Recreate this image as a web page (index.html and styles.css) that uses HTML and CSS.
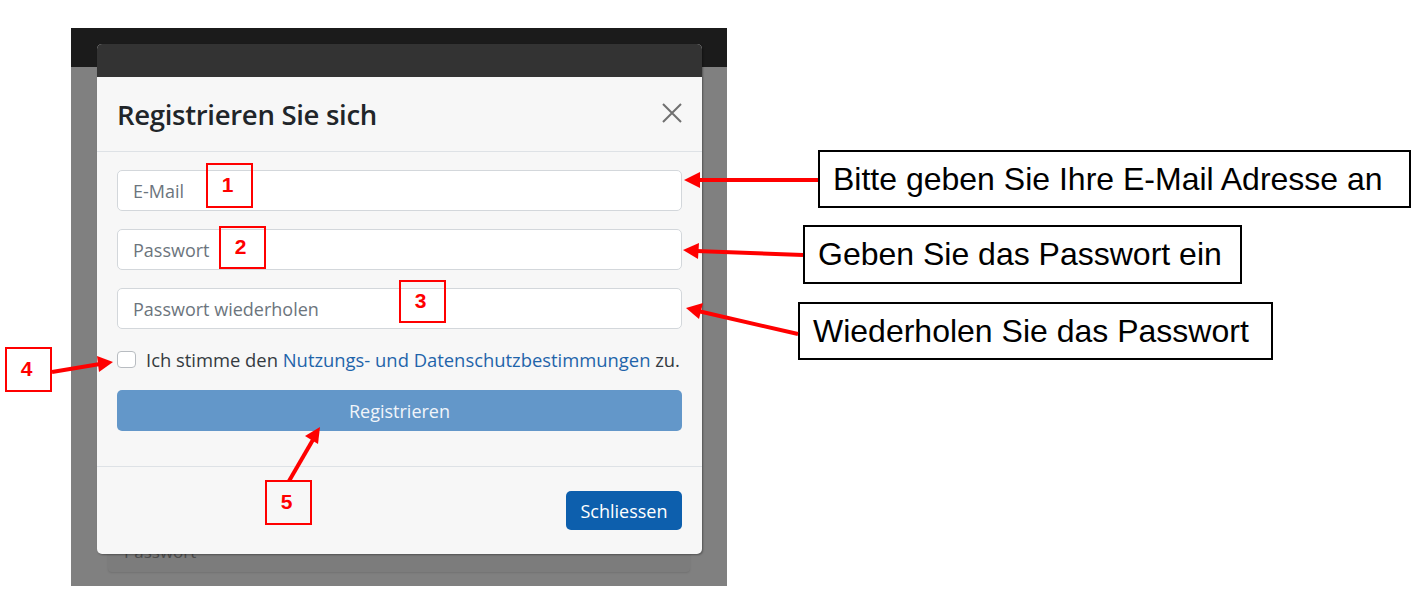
FILE: index.html
```html
<!DOCTYPE html>
<html lang="de">
<head>
<meta charset="utf-8">
<title>Registrieren</title>
<link rel="stylesheet" href="styles.css">
</head>
<body>
<div class="canvas">
  <div class="shot">
    <div class="nav"></div>
    <div class="page">
      <div class="bg-card"><span class="bg-label">Passwort</span></div>
    </div>
    <div class="modal">
      <div class="modal-topband"></div>
      <div class="modal-header">
        <h5 class="modal-title">Registrieren Sie sich</h5>
        <button class="btn-close" aria-label="Schliessen">
          <svg width="22" height="20" viewBox="0 0 22 20"><path d="M2 1 L20 19 M20 1 L2 19" stroke="#707070" stroke-width="2" fill="none"/></svg>
        </button>
      </div>
      <div class="modal-body">
        <input class="form-control" type="email" placeholder="E-Mail">
        <input class="form-control" type="password" placeholder="Passwort">
        <input class="form-control" type="password" placeholder="Passwort wiederholen">
        <label class="check-row">
          <span class="check-box"></span>
          <span>Ich stimme den <a class="link" href="#">Nutzungs- und Datenschutzbestimmungen</a> zu.</span>
        </label>
        <button class="btn-register">Registrieren</button>
      </div>
      <div class="modal-footer">
        <button class="btn-primary">Schliessen</button>
      </div>
    </div>
  </div>

  <div class="callout callout-1">Bitte geben Sie Ihre E-Mail Adresse an</div>
  <div class="callout callout-2">Geben Sie das Passwort ein</div>
  <div class="callout callout-3">Wiederholen Sie das Passwort</div>

  <div class="num num-1">1</div>
  <div class="num num-2">2</div>
  <div class="num num-3">3</div>
  <div class="num num-4">4</div>
  <div class="num num-5">5</div>

  <svg class="arrows" width="1428" height="612" viewBox="0 0 1428 612">
    <g stroke="#ff0000" stroke-width="4" fill="none" stroke-linecap="butt">
      <line x1="818" y1="180" x2="698" y2="180"/>
      <line x1="803" y1="255" x2="696" y2="251"/>
      <line x1="798" y1="334" x2="698" y2="311"/>
      <line x1="52" y1="372" x2="100" y2="364"/>
      <line x1="289" y1="481" x2="314" y2="438"/>
    </g>
    <g fill="#ff0000">
      <polygon points="684,180 700,172 700,188"/>
      <polygon points="683,250 699,243 698,259"/>
      <polygon points="686,308 703,303 699,319"/>
      <polygon points="113,362 97,356 99,372"/>
      <polygon points="320,427 318,444 305,436"/>
    </g>
  </svg>
</div>
</body>
</html>
```

FILE: styles.css
```css
* { box-sizing: border-box; }
html, body { margin: 0; padding: 0; background: #ffffff; }
body { font-family: "Open Sans", "Noto Sans", sans-serif; }

.canvas {
  position: relative;
  width: 1428px;
  height: 612px;
  overflow: hidden;
}

.shot {
  position: absolute;
  left: 71px;
  top: 28px;
  width: 656px;
  height: 558px;
  background: #808080;
  display: flex;
  flex-direction: column;
}

.nav { height: 39px; background: #1b1b1b; flex: none; }

.page {
  flex: 1;
  padding: 300px 37px 14px;
  display: flex;
  flex-direction: column;
}

.bg-card {
  flex: 1;
  background: #7c7c7c;
  border-radius: 4px;
  box-shadow: 0 1px 2px rgba(0,0,0,0.12);
  display: flex;
  align-items: flex-end;
  padding: 0 16px 10px;
}
.bg-label { color: #4d4d4d; font-size: 17px; line-height: 20px; }

.modal {
  position: absolute;
  left: 26px;
  top: 16px;
  width: 605px;
  height: 510px;
  background: #f7f7f7;
  border-radius: 5px;
  overflow: hidden;
  box-shadow: 1px 1px 2px rgba(0,0,0,0.35);
  display: flex;
  flex-direction: column;
}

.modal-topband { height: 33px; background: #333333; flex: none; }

.modal-header {
  height: 75px;
  flex: none;
  display: flex;
  align-items: center;
  justify-content: space-between;
  padding: 0 19px 0 20px;
  border-bottom: 1px solid #dee2e6;
}
.modal-title {
  margin: 0;
  font-size: 27.5px;
  font-weight: 600;
  color: #212529;
  letter-spacing: -0.3px;
}
.btn-close {
  border: 0;
  background: transparent;
  padding: 0;
  width: 22px;
  height: 20px;
  display: flex;
  margin-bottom: 2px;
}

.modal-body {
  padding: 18px 20px 0;
  height: 315px;
  flex: none;
  display: flex;
  flex-direction: column;
  border-bottom: 1px solid #dee2e6;
}

.form-control {
  display: block;
  width: 100%;
  height: 41px;
  margin: 0 0 18px;
  padding: 0 15px;
  font-family: "Open Sans", "Noto Sans", sans-serif;
  font-size: 18px;
  color: #495057;
  background: #ffffff;
  border: 1px solid #d3d7db;
  border-radius: 5px;
  outline: none;
}
.form-control::placeholder { color: #6c757d; opacity: 1; }

.check-row {
  display: flex;
  align-items: center;
  gap: 10px;
  margin-top: -1px;
  font-size: 18.4px;
  color: #343a40;
  white-space: nowrap;
  height: 26px;
}
.check-box {
  width: 19px;
  height: 17px;
  border: 1px solid #b8bcc1;
  border-radius: 4px;
  background: #ffffff;
  flex: none;
}
.link { color: #1f64aa; text-decoration: none; }

.btn-register {
  margin-top: 18px;
  height: 41px;
  width: 100%;
  border: 0;
  border-radius: 5px;
  background: #6397c9;
  color: #f1f5fa;
  font-family: "Open Sans", "Noto Sans", sans-serif;
  font-size: 18px;
}

.modal-footer {
  flex: 1;
  display: flex;
  justify-content: flex-end;
  align-items: center;
  padding: 0 20px;
}
.btn-primary {
  height: 39px;
  width: 116px;
  border: 0;
  border-radius: 5px;
  background: #0d5fad;
  color: #ffffff;
  font-family: "Open Sans", "Noto Sans", sans-serif;
  font-size: 18px;
}

.callout {
  position: absolute;
  border: 2px solid #000000;
  background: #ffffff;
  color: #000000;
  font-family: "Liberation Sans", Arial, sans-serif;
  font-size: 32px;
  display: flex;
  align-items: center;
  padding-left: 13px;
  white-space: nowrap;
}
.callout-1 { left: 818px; top: 150px; width: 593px; height: 58px; }
.callout-2 { left: 803px; top: 225px; width: 439px; height: 59px; }
.callout-3 { left: 798px; top: 302px; width: 475px; height: 58px; }

.num {
  position: absolute;
  width: 47px;
  height: 45px;
  border: 2px solid #ff0000;
  color: #ff0000;
  font-family: "Liberation Sans", Arial, sans-serif;
  font-weight: bold;
  font-size: 21px;
  display: flex;
  align-items: center;
  justify-content: center;
  padding-bottom: 2px;
  padding-right: 4px;
}
.num-1 { left: 206px; top: 163px; }
.num-2 { left: 219px; top: 226px; height: 43px; }
.num-3 { left: 399px; top: 280px; height: 43px; }
.num-4 { left: 5px; top: 347px; }
.num-5 { left: 265px; top: 480px; }

.arrows { position: absolute; left: 0; top: 0; pointer-events: none; }
```
